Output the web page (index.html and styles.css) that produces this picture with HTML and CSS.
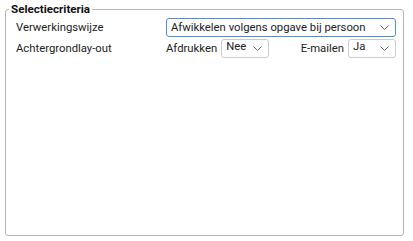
FILE: index.html
```html
<!DOCTYPE html>
<html lang="en">
<head>
    <meta charset="UTF-8">
    <title>Selectiecriteria</title>
    <link rel="stylesheet" href="styles.css">
</head>
<body>
    <fieldset class="panel">
        <legend class="panel-title">Selectiecriteria</legend>

        <div class="form-grid">
            <div class="field-label">Verwerkingswijze</div>
            <div class="select focused">
                <span class="select-value">Afwikkelen volgens opgave bij persoon</span>
                <svg class="chevron" width="9" height="5" viewBox="0 0 9 5"><path d="M0.5 0.5 L4.5 4.5 L8.5 0.5" fill="none" stroke="#666" stroke-width="1"/></svg>
            </div>

            <div class="field-label">Achtergrondlay-out</div>
            <div class="inline-row">
                <span class="inline-label">Afdrukken</span>
                <div class="select small">
                    <span class="select-value raised">Nee</span>
                    <svg class="chevron" width="9" height="5" viewBox="0 0 9 5"><path d="M0.5 0.5 L4.5 4.5 L8.5 0.5" fill="none" stroke="#666" stroke-width="1"/></svg>
                </div>
                <span class="inline-label push">E-mailen</span>
                <div class="select small">
                    <span class="select-value raised">Ja</span>
                    <svg class="chevron" width="9" height="5" viewBox="0 0 9 5"><path d="M0.5 0.5 L4.5 4.5 L8.5 0.5" fill="none" stroke="#666" stroke-width="1"/></svg>
                </div>
            </div>
        </div>
    </fieldset>
</body>
</html>
```

FILE: styles.css
```css
body {
    margin: 0;
    background-color: #ffffff;
    font-family: Roboto, "Noto Sans", sans-serif;
    font-size: 11.3px;
    color: #222222;
}

.panel {
    box-sizing: border-box;
    height: 234px;
    margin: 2px 9px 0 5px;
    padding: 2px 7px 0 10px;
    border: 1px solid #b5b5b5;
    border-radius: 3px;
}

.panel-title {
    margin-left: -7px;
    padding: 0 2px;
    font-size: 11.6px;
    font-weight: bold;
    line-height: 14px;
    color: #111111;
}

.form-grid {
    display: grid;
    grid-template-columns: 150px 1fr;
    row-gap: 2px;
    align-items: center;
}

.field-label {
    line-height: 19px;
}

.select {
    box-sizing: border-box;
    height: 19px;
    display: flex;
    align-items: center;
    justify-content: space-between;
    padding: 0 6px 0 4px;
    border: 1px solid #cccccc;
    border-radius: 3px;
    background-color: #ffffff;
}

.select.focused {
    border-color: #4a90e2;
}

.select.small {
    width: 48px;
}

.select-value {
    line-height: 17px;
}

.select-value.raised {
    position: relative;
    top: -2px;
}

.chevron {
    flex: none;
}

.inline-row {
    display: flex;
    align-items: center;
    gap: 4px;
}

.inline-label {
    line-height: 19px;
}

.inline-label.push {
    margin-left: auto;
}
```
